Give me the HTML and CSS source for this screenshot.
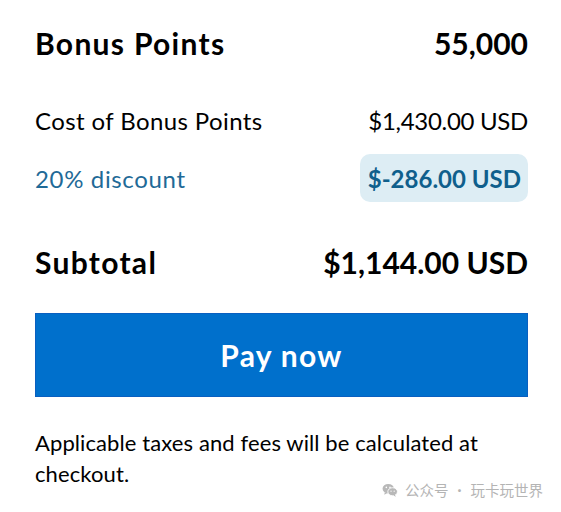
FILE: index.html
```html
<!DOCTYPE html>
<html>
<head>
<meta charset="utf-8">
<link rel="stylesheet" href="styles.css">
</head>
<body>
<div class="card">
  <div class="row head">
    <span class="label">Bonus Points</span>
    <span>55,000</span>
  </div>
  <div class="row cost">
    <span class="label">Cost of Bonus Points</span>
    <span class="amount">$1,430.00 USD</span>
  </div>
  <div class="row discount">
    <span class="label disc-label">20% discount</span>
    <span class="pill">$-286.00 USD</span>
  </div>
  <div class="row subtotal">
    <span class="label">Subtotal</span>
    <span>$1,144.00 USD</span>
  </div>
  <button class="pay">Pay now</button>
  <div class="note"><span class="line">Applicable taxes and fees will be calculated at</span><span class="line">checkout.</span></div>
</div>
<div class="watermark">
  <svg class="wx" width="16" height="14" viewBox="0 0 18 16">
    <ellipse cx="7" cy="6.5" rx="6.5" ry="5.5" fill="#b8b8b8"/>
    <path d="M3 10.5 L2.5 13.5 L6 11.5 Z" fill="#b8b8b8"/>
    <ellipse cx="12" cy="10" rx="5.5" ry="4.6" fill="#b8b8b8" stroke="#fff" stroke-width="1"/>
    <path d="M14.5 13.5 L15.8 15.6 L12.8 14.3 Z" fill="#b8b8b8"/>
    <circle cx="4.8" cy="5" r="0.9" fill="#fff"/>
    <circle cx="9" cy="5" r="0.9" fill="#fff"/>
    <circle cx="10.2" cy="9.4" r="0.7" fill="#fff"/>
    <circle cx="13.8" cy="9.4" r="0.7" fill="#fff"/>
  </svg>
  <span class="wm-text">公众号</span>
  <span class="wm-dot">·</span>
  <span class="wm-text">玩卡玩世界</span>
</div>
</body>
</html>
```
FILE: styles.css
```css
html, body {
  margin: 0;
  padding: 0;
  background: #fff;
}
body {
  font-family: "Lato", "Noto Sans", sans-serif;
  color: #000;
  width: 561px;
  height: 512px;
  position: relative;
  overflow: hidden;
}
.card {
  width: 493px;
  margin-left: 35px;
  padding-top: 20px;
  display: flex;
  flex-direction: column;
}
.row {
  display: flex;
  justify-content: space-between;
  align-items: center;
}
.head {
  height: 46px;
  font-size: 30px;
  font-weight: 700;
}
.head .label,
.subtotal .label {
  letter-spacing: 1.3px;
}
.cost {
  height: 46px;
  margin-top: 31px;
  font-size: 24px;
}
.cost .label {
  letter-spacing: 0.4px;
}
.amount {
  letter-spacing: -0.3px;
}
.discount {
  height: 48px;
  margin-top: 11px;
  font-size: 24px;
}
.disc-label {
  color: #1f6a97;
  letter-spacing: 0.65px;
}
.pill {
  background: #ddedf4;
  color: #0f5f8c;
  font-weight: 700;
  height: 48px;
  padding: 0 7px 0 8px;
  border-radius: 10px;
  display: flex;
  align-items: center;
}
.subtotal {
  height: 46px;
  margin-top: 37px;
  font-size: 30px;
  font-weight: 700;
}
.pay {
  margin-top: 28px;
  height: 84px;
  width: 100%;
  background: #0070cc;
  border: 1px solid #0a5fc0;
  color: #fff;
  font-family: inherit;
  font-size: 30px;
  font-weight: 700;
  letter-spacing: 1.3px;
  padding: 0;
}
.note {
  margin-top: 30px;
  display: flex;
  flex-direction: column;
  align-items: flex-start;
  font-size: 22px;
  line-height: 31px;
  letter-spacing: 0.1px;
}
.line {
  display: block;
  white-space: nowrap;
}
.watermark {
  position: absolute;
  left: 382px;
  top: 479px;
  display: flex;
  align-items: center;
  gap: 7px;
  color: #b4b4b4;
  font-family: "Noto Sans CJK SC", sans-serif;
  font-size: 14.5px;
  line-height: 22px;
  white-space: nowrap;
}
.wm-dot {
  font-family: "Lato", sans-serif;
  font-weight: 700;
  margin: 0 2px;
}
```
